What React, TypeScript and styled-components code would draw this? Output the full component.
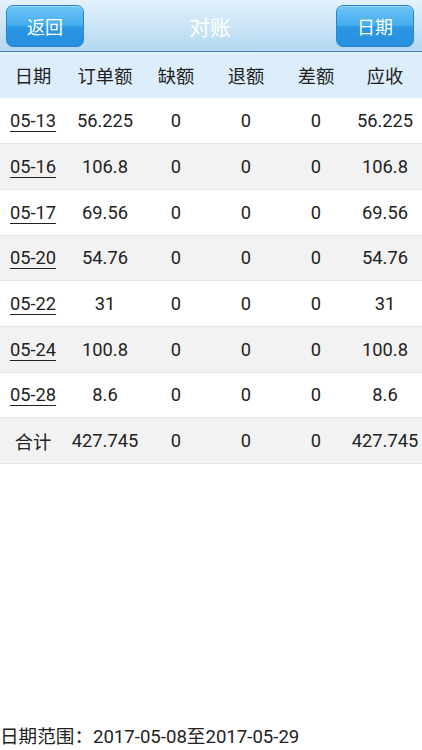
import React from 'react'
import styled, { createGlobalStyle } from 'styled-components'

const GlobalStyle = createGlobalStyle`
  html, body {
    margin: 0;
    padding: 0;
    background: #fff;
  }
  body {
    font-family: Roboto, "Noto Sans CJK SC", sans-serif;
    color: #222;
  }
`

const Page = styled.div`
  display: flex;
  flex-direction: column;
  height: 750px;
  width: 422px;
  overflow: hidden;
`

const Header = styled.div`
  height: 52px;
  display: flex;
  align-items: center;
  justify-content: space-between;
  padding: 0 8px 0 6px;
  box-sizing: border-box;
  background: linear-gradient(#e4f2fc, #b3d8f1);
  border-bottom: 1px solid #4a7fb8;
`

const NavButton = styled.button`
  width: 78px;
  height: 42px;
  border: 1px solid #2d83cc;
  border-radius: 7px;
  background: linear-gradient(#6ec4f4 0%, #46adee 48%, #2b97e3 52%, #2690df 100%);
  color: #fff;
  font-family: "Noto Sans CJK SC", sans-serif;
  font-size: 18px;
  padding: 0;
  box-shadow: inset 0 1px 0 rgba(255, 255, 255, 0.35);
`

const Title = styled.div`
  color: #fff;
  font-family: "Noto Sans CJK SC", sans-serif;
  font-size: 21px;
`

const Table = styled.table`
  width: 422px;
  border-collapse: collapse;
  table-layout: fixed;
  font-size: 18.3px;
`

const HeadRow = styled.tr`
  height: 46px;
  background: #dcedfb;
`

const HeadCell = styled.th`
  font-weight: normal;
  text-align: center;
  padding: 0;
  color: #222;
`

const Row = styled.tr<{ $alt?: boolean }>`
  height: 45.7px;
  background: ${(p) => (p.$alt ? '#f2f2f2' : '#fff')};
  border-bottom: 1px solid #e6e6e6;
`

const Cell = styled.td`
  text-align: center;
  padding: 0;
  color: #222;
`

const DateLink = styled.span`
  text-decoration: underline;
  text-underline-offset: 4px;
`

const Spacer = styled.div`
  flex: 1;
`

const Footer = styled.div`
  font-size: 18.6px;
  line-height: 24px;
  padding-bottom: 1px;
  color: #222;
`

const widths = [66, 78, 64, 76, 64, 74]
const heads = ['日期', '订单额', '缺额', '退额', '差额', '应收']

const rows = [
  ['05-13', '56.225', '56.225'],
  ['05-16', '106.8', '106.8'],
  ['05-17', '69.56', '69.56'],
  ['05-20', '54.76', '54.76'],
  ['05-22', '31', '31'],
  ['05-24', '100.8', '100.8'],
  ['05-28', '8.6', '8.6'],
]

const App: React.FC = () => {
  return (
    <Page>
      <GlobalStyle />
      <Header>
        <NavButton>返回</NavButton>
        <Title>对账</Title>
        <NavButton>日期</NavButton>
      </Header>
      <Table>
        <colgroup>
          {widths.map((w, i) => (
            <col key={i} style={{ width: w }} />
          ))}
        </colgroup>
        <thead>
          <HeadRow>
            {heads.map((h) => (
              <HeadCell key={h}>{h}</HeadCell>
            ))}
          </HeadRow>
        </thead>
        <tbody>
          {rows.map(([date, order, due], i) => (
            <Row key={date} $alt={i % 2 === 1}>
              <Cell>
                <DateLink>{date}</DateLink>
              </Cell>
              <Cell>{order}</Cell>
              <Cell>0</Cell>
              <Cell>0</Cell>
              <Cell>0</Cell>
              <Cell>{due}</Cell>
            </Row>
          ))}
          <Row $alt>
            <Cell>合计</Cell>
            <Cell>427.745</Cell>
            <Cell>0</Cell>
            <Cell>0</Cell>
            <Cell>0</Cell>
            <Cell>427.745</Cell>
          </Row>
        </tbody>
      </Table>
      <Spacer />
      <Footer>日期范围：2017-05-08至2017-05-29</Footer>
    </Page>
  )
}

export default App
